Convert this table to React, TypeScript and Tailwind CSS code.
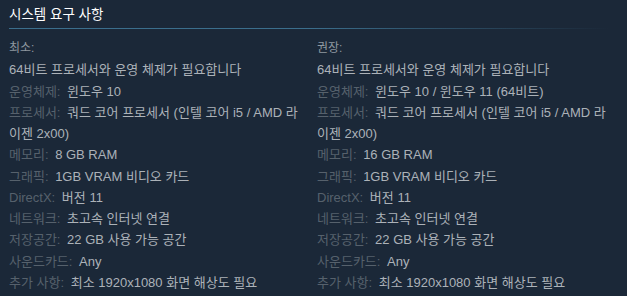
const minimum = [
  { label: '', value: '64비트 프로세서와 운영 체제가 필요합니다' },
  { label: '운영체제:', value: '윈도우 10' },
  { label: '프로세서:', value: '쿼드 코어 프로세서 (인텔 코어 i5 / AMD 라이젠 2x00)' },
  { label: '메모리:', value: '8 GB RAM' },
  { label: '그래픽:', value: '1GB VRAM 비디오 카드' },
  { label: 'DirectX:', value: '버전 11' },
  { label: '네트워크:', value: '초고속 인터넷 연결' },
  { label: '저장공간:', value: '22 GB 사용 가능 공간' },
  { label: '사운드카드:', value: 'Any' },
  { label: '추가 사항:', value: '최소 1920x1080 화면 해상도 필요' },
];

const recommended = [
  { label: '', value: '64비트 프로세서와 운영 체제가 필요합니다' },
  { label: '운영체제:', value: '윈도우 10 / 윈도우 11 (64비트)' },
  { label: '프로세서:', value: '쿼드 코어 프로세서 (인텔 코어 i5 / AMD 라이젠 2x00)' },
  { label: '메모리:', value: '16 GB RAM' },
  { label: '그래픽:', value: '1GB VRAM 비디오 카드' },
  { label: 'DirectX:', value: '버전 11' },
  { label: '네트워크:', value: '초고속 인터넷 연결' },
  { label: '저장공간:', value: '22 GB 사용 가능 공간' },
  { label: '사운드카드:', value: 'Any' },
  { label: '추가 사항:', value: '최소 1920x1080 화면 해상도 필요' },
];

type Row = { label: string; value: string };

function Column({ title, rows }: { title: string; rows: Row[] }) {
  return (
    <div className="w-[296px]">
      <div className="text-[12px] text-[#8f98a0]">{title}</div>
      <ul>
        {rows.map((r, i) => (
          <li key={i} className="text-[#acb2b8] break-all">
            {r.label && <span className="text-[#56616c] mr-[3px]">{r.label} </span>}
            {r.value}
          </li>
        ))}
      </ul>
    </div>
  );
}

export default function App() {
  return (
    <div
      className="w-[627px] h-[296px] bg-[#1b2838] overflow-hidden"
      style={{ fontFamily: '"Liberation Sans", "Noto Sans CJK KR", sans-serif' }}
    >
      <div className="pl-[9px] pt-[4px]">
        <h2 className="text-[13.5px] leading-[22px] text-white">시스템 요구 사항</h2>
      </div>
      <div className="mt-[2px] h-px w-[600px] ml-[9px] bg-gradient-to-r from-[#3b6e8c] via-[#3b6e8c] to-transparent" />
      <div className="flex gap-[12px] pl-[9px] pt-[9px] text-[13px] leading-[21.25px]">
        <Column title="최소:" rows={minimum} />
        <Column title="권장:" rows={recommended} />
      </div>
    </div>
  );
}
